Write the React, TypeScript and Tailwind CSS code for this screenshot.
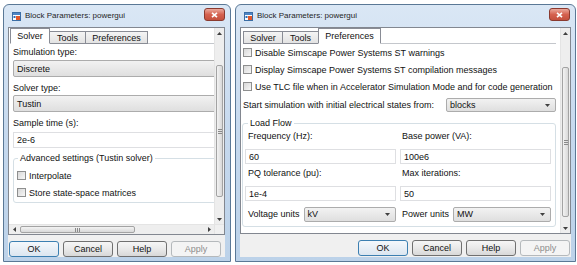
import React from 'react';

type Kids = { children?: React.ReactNode; className?: string };

function TitleIcon() {
  return (
    <svg width="9" height="9" viewBox="0 0 9 9" className="shrink-0">
      <rect x="0.5" y="0.5" width="8" height="8" fill="#ffffff" stroke="#3b6ea5" />
      <rect x="1" y="1" width="7" height="2" fill="#4f86c6" />
      <rect x="4" y="4" width="4" height="4" fill="#e2572b" />
      <rect x="1.5" y="4" width="2" height="2" fill="#2f6db3" />
    </svg>
  );
}

function CloseButton() {
  return (
    <div className="ml-auto self-start mt-[3px] w-[21px] h-[13px] rounded-[3px] border border-[#8a3a2f] bg-linear-to-b from-[#eaa89c] via-[#d5614f] to-[#c4503d] flex items-center justify-center">
      <svg width="7" height="6" viewBox="0 0 7 6">
        <path d="M1 0.8 L6 5.2 M6 0.8 L1 5.2" stroke="#ffffff" strokeWidth="1.6" />
      </svg>
    </div>
  );
}

function Window({ className, children }: Kids) {
  return (
    <div
      className={`${className} h-[258px] flex flex-col rounded-t-[6px] border border-[#5a7896] bg-linear-to-b from-[#dae7f5] via-[#c6d9ee] to-[#bcd2e9]`}
    >
      <div className="h-[22px] shrink-0 flex items-center pl-[8px] pr-[5px]">
        <TitleIcon />
        <span className="ml-[4px] text-[8px] text-[#1f1f1f]">Block Parameters: powergui</span>
        <CloseButton />
      </div>
      {children}
    </div>
  );
}

function UpArrow() {
  return (
    <svg width="5" height="3" viewBox="0 0 5 3">
      <path d="M0 3 L2.5 0 L5 3Z" fill="#404040" />
    </svg>
  );
}

function DownArrow() {
  return (
    <svg width="5" height="3" viewBox="0 0 5 3">
      <path d="M0 0 L2.5 3 L5 0Z" fill="#404040" />
    </svg>
  );
}

function VScroll({ top, size }: { top: string; size: string }) {
  return (
    <div className="w-[10px] shrink-0 flex flex-col bg-[#eeeeee] border-l border-[#e4e4e4]">
      <div className="h-[10px] flex items-center justify-center">
        <UpArrow />
      </div>
      <div
        className={`${top} ${size} mx-[1px] rounded-[2px] border border-[#a3a3a3] bg-linear-to-r from-[#f3f3f3] to-[#d9d9d9] flex flex-col items-center justify-center gap-[1px]`}
      >
        <div className="w-[4px] h-px bg-[#8a8a8a]" />
        <div className="w-[4px] h-px bg-[#8a8a8a]" />
        <div className="w-[4px] h-px bg-[#8a8a8a]" />
      </div>
      <div className="flex-1" />
      <div className="h-[10px] flex items-center justify-center">
        <DownArrow />
      </div>
    </div>
  );
}

function HScroll() {
  return (
    <div className="h-[10px] shrink-0 flex">
      <div className="flex-1 flex bg-[#eeeeee] border-t border-[#e4e4e4]">
        <div className="w-[10px] flex items-center justify-center">
          <svg width="3" height="5" viewBox="0 0 3 5">
            <path d="M3 0 L0 2.5 L3 5Z" fill="#404040" />
          </svg>
        </div>
        <div className="ml-px w-[115px] my-[1px] rounded-[2px] border border-[#a3a3a3] bg-linear-to-b from-[#f3f3f3] to-[#d9d9d9] flex items-center justify-center gap-[1px]">
          <div className="w-px h-[4px] bg-[#8a8a8a]" />
          <div className="w-px h-[4px] bg-[#8a8a8a]" />
          <div className="w-px h-[4px] bg-[#8a8a8a]" />
        </div>
        <div className="flex-1" />
        <div className="w-[10px] flex items-center justify-center">
          <svg width="3" height="5" viewBox="0 0 3 5">
            <path d="M0 0 L3 2.5 L0 5Z" fill="#404040" />
          </svg>
        </div>
      </div>
      <div className="w-[10px] bg-[#f0f0f0] border-l border-t border-[#e4e4e4]" />
    </div>
  );
}

function Tabs({ active }: { active: number }) {
  const tabs: [string, string][] = [
    ['Solver', 'w-[40px]'],
    ['Tools', 'w-[37px]'],
    ['Preferences', 'w-[63px]'],
  ];
  return (
    <div className="flex items-end h-[16px] border-b border-[#c4c7cc]">
      {tabs.map(([name, w], i) => (
        <div
          key={name}
          className={`${w} ${i > 0 ? '-ml-px' : ''} -mb-px flex items-center justify-center border border-[#898c95] ${
            i === active
              ? 'h-[16px] bg-white border-b-white z-10'
              : 'h-[13px] bg-linear-to-b from-[#f4f4f4] to-[#e3e3e3]'
          }`}
        >
          {name}
        </div>
      ))}
    </div>
  );
}

function Label({ children, className = '' }: Kids) {
  return <div className={`h-[12px] leading-[12px] whitespace-nowrap ${className}`}>{children}</div>;
}

function Combo({ value, arrow, className = '' }: { value: string; arrow?: boolean; className?: string }) {
  return (
    <div
      className={`flex items-center pl-[3px] pr-[5px] rounded-[2px] border border-[#acacac] bg-linear-to-b from-[#f2f2f2] to-[#dfdfdf] ${className}`}
    >
      <span>{value}</span>
      {arrow && (
        <span className="ml-auto flex items-center">
          <DownArrow />
        </span>
      )}
    </div>
  );
}

function Field({ value, className = '' }: { value: string; className?: string }) {
  return (
    <div className={`flex items-center pl-[3px] bg-white border border-[#dedfe2] ${className}`}>{value}</div>
  );
}

function Check({ label, className = '' }: { label: string; className?: string }) {
  return (
    <div className={`flex items-center h-[17px] gap-[3px] whitespace-nowrap ${className}`}>
      <span className="w-[9px] h-[9px] shrink-0 border border-[#8e8f8f] bg-linear-to-br from-[#d8d8d8] to-[#f7f7f7]" />
      <span>{label}</span>
    </div>
  );
}

function Buttons({ className = '' }: { className?: string }) {
  const base = 'w-[50px] h-[16px] rounded-[3px] border flex items-center justify-center';
  const normal = 'border-[#707070] bg-linear-to-b from-[#f6f6f6] via-[#e9e9e9] to-[#d8d8d8]';
  return (
    <div className={`h-[22px] shrink-0 flex items-start pt-[6px] gap-[4px] ${className}`}>
      <div className={`${base} border-[#3c7fb1] bg-linear-to-b from-[#f4f8fc] via-[#e8eff6] to-[#dce6f0]`}>OK</div>
      <div className={`${base} ${normal}`}>Cancel</div>
      <div className={`${base} ${normal}`}>Help</div>
      <div className={`${base} border-[#b5b9bc] bg-[#f4f4f4] text-[#8c8c8c]`}>Apply</div>
    </div>
  );
}

function SolverWindow() {
  return (
    <Window className="w-[228px]">
      <div className="flex-1 ml-[4px] mr-[5px] mb-[4px] flex flex-col bg-[#f0f0f0]">
        <div className="h-[208px] shrink-0 flex flex-col border border-[#828790] bg-white">
          <div className="flex-1 flex min-h-0">
            <div className="flex-1 min-w-0 overflow-hidden pl-[1px]">
              <Tabs active={0} />
              <div className="pl-[3px]">
                <Label className="mt-[2px]">Simulation type:</Label>
                <Combo value="Discrete" className="mt-[2px] h-[17px] -mr-[8px]" />
                <Label className="mt-[5px]">Solver type:</Label>
                <Combo value="Tustin" className="mt-[1px] h-[17px] -mr-[8px]" />
                <Label className="mt-[5px]">Sample time (s):</Label>
                <Field value="2e-6" className="mt-[3px] h-[16px] -mr-[8px]" />
                <fieldset className="mt-[4px] -mr-[8px] border border-[#d5dfe5] rounded-[3px] pl-[3px] pb-[1px]">
                  <legend className="ml-[1px] px-[2px] leading-[12px]">Advanced settings (Tustin solver)</legend>
                  <Check label="Interpolate" className="mt-[3px]" />
                  <Check label="Store state-space matrices" />
                </fieldset>
              </div>
            </div>
            <VScroll top="mt-[27px]" size="h-[132px]" />
          </div>
          <HScroll />
        </div>
        <Buttons className="pl-px" />
      </div>
    </Window>
  );
}

function PreferencesWindow() {
  return (
    <Window className="w-[341px]">
      <div className="flex-1 mx-[4px] mb-[4px] flex flex-col bg-[#f0f0f0]">
        <div className="h-[207px] shrink-0 flex border border-[#828790] bg-white">
          <div className="flex-1 min-w-0 overflow-hidden pl-[2px] pr-[4px]">
            <Tabs active={2} />
            <Check label="Disable Simscape Power Systems ST warnings" />
            <Check label="Display Simscape Power Systems ST compilation messages" />
            <Check label="Use TLC file when in Accelerator Simulation Mode and for code generation" />
            <div className="mt-[2px] h-[16px] flex items-center whitespace-nowrap">
              <span>Start simulation with initial electrical states from:</span>
              <Combo value="blocks" arrow className="ml-auto w-[110px] h-[14px]" />
            </div>
            <fieldset className="mt-[4px] -ml-px border border-[#d5dfe5] rounded-[3px] pl-[2px] pr-[4px] pb-[4px]">
              <legend className="ml-[3px] px-[2px] leading-[12px]">Load Flow</legend>
              <div className="grid grid-cols-2 gap-x-[4px]">
                <Label className="mt-[1px] pl-[3px]">Frequency (Hz):</Label>
                <Label className="mt-[1px] pl-[2px]">Base power (VA):</Label>
                <Field value="60" className="mt-[7px] h-[15px]" />
                <Field value="100e6" className="mt-[7px] h-[15px]" />
                <Label className="mt-[3px] pl-[3px]">PQ tolerance (pu):</Label>
                <Label className="mt-[3px] pl-[2px]">Max iterations:</Label>
                <Field value="1e-4" className="mt-[7px] h-[15px]" />
                <Field value="50" className="mt-[7px] h-[15px]" />
                <div className="mt-[5px] h-[16px] flex items-center pl-[3px]">
                  <span className="whitespace-nowrap">Voltage units</span>
                  <Combo value="kV" arrow className="ml-[4px] flex-1 h-[15px]" />
                </div>
                <div className="mt-[5px] h-[16px] flex items-center pl-[2px]">
                  <span className="whitespace-nowrap">Power units</span>
                  <Combo value="MW" arrow className="ml-[4px] flex-1 h-[15px]" />
                </div>
              </div>
            </fieldset>
          </div>
          <VScroll top="mt-[29px]" size="h-[150px]" />
        </div>
        <Buttons className="justify-end pr-px" />
      </div>
    </Window>
  );
}

export default function App() {
  return (
    <div className="w-[577px] h-[265px] bg-white flex items-start pt-[4px] pl-[3px] gap-[4px] font-['Liberation_Sans',Arial,sans-serif] text-[9px] leading-[12px] text-[#111111]">
      <SolverWindow />
      <PreferencesWindow />
    </div>
  );
}
